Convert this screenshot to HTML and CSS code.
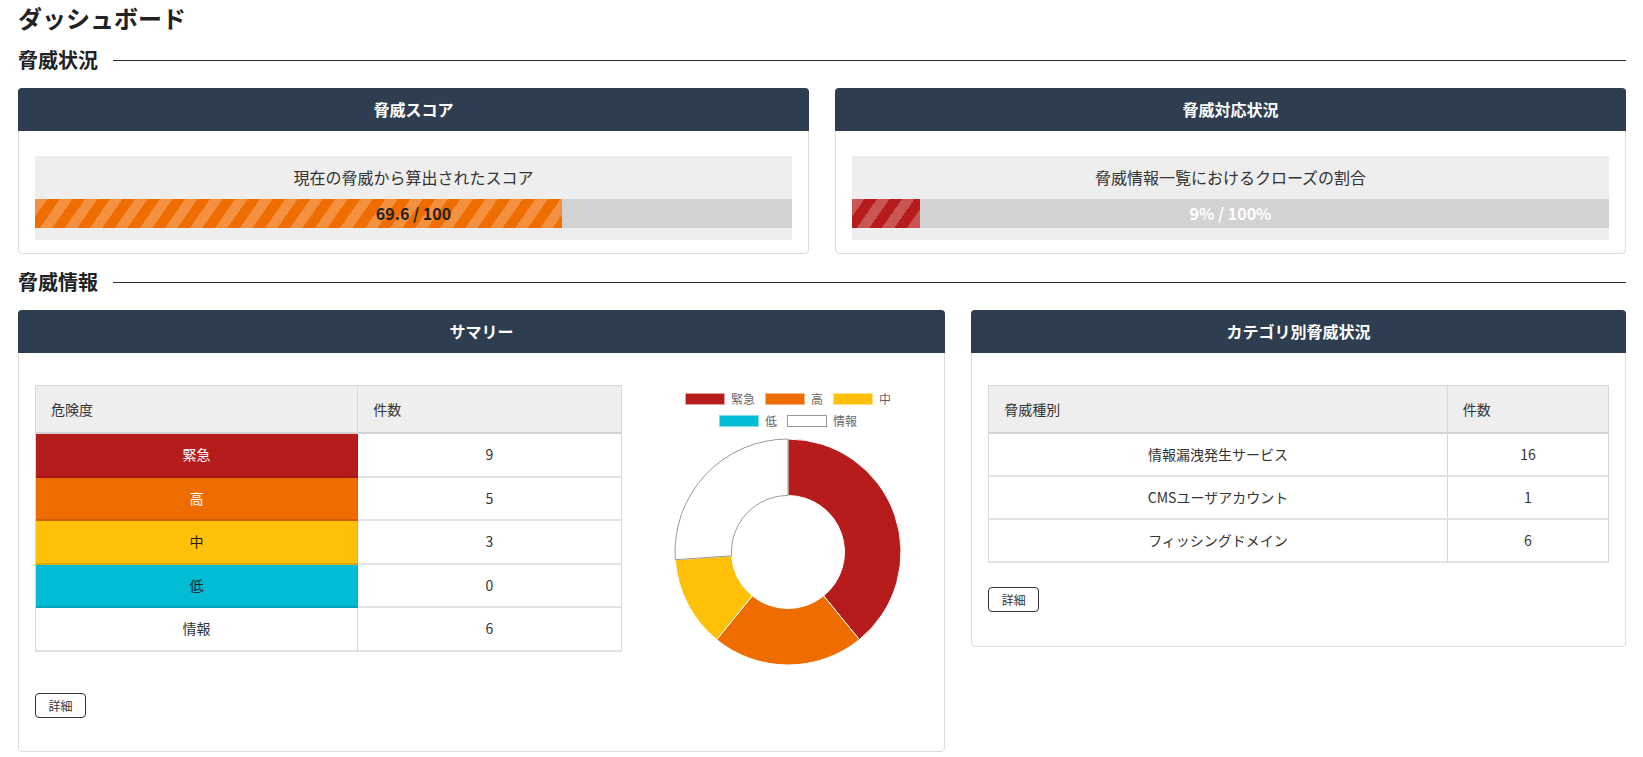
FILE: index.html
```html
<!DOCTYPE html>
<html lang="ja">
<head>
    <meta charset="UTF-8">
    <meta name="viewport" content="width=device-width, initial-scale=1.0">
    <title>ダッシュボード</title>
    <link rel="stylesheet" href="styles.css">
</head>
<body>
    <h1 class="page-title">ダッシュボード</h1>

    <h2 class="section-title">脅威状況</h2>
    <div class="row-half">
        <div class="card">
            <div class="card-header">脅威スコア</div>
            <div class="card-body score-body">
                <div class="score-box">
                    <p class="score-caption">現在の脅威から算出されたスコア</p>
                    <div class="bar">
                        <div class="bar-fill fill-orange" style="width: 69.6%"></div>
                        <span class="bar-label">69.6 / 100</span>
                    </div>
                </div>
            </div>
        </div>
        <div class="card">
            <div class="card-header">脅威対応状況</div>
            <div class="card-body score-body">
                <div class="score-box">
                    <p class="score-caption">脅威情報一覧におけるクローズの割合</p>
                    <div class="bar">
                        <div class="bar-fill fill-red" style="width: 9%"></div>
                        <span class="bar-label label-light">9% / 100%</span>
                    </div>
                </div>
            </div>
        </div>
    </div>

    <h2 class="section-title">脅威情報</h2>
    <div class="row-info">
        <div class="card">
            <div class="card-header">サマリー</div>
            <div class="card-body summary-body">
                <div class="summary-row">
                    <table class="data-table summary-table">
                        <thead>
                            <tr><th class="col-level">危険度</th><th>件数</th></tr>
                        </thead>
                        <tbody>
                            <tr><td class="lv-critical">緊急</td><td>9</td></tr>
                            <tr><td class="lv-high">高</td><td>5</td></tr>
                            <tr><td class="lv-medium">中</td><td>3</td></tr>
                            <tr><td class="lv-low">低</td><td>0</td></tr>
                            <tr><td>情報</td><td>6</td></tr>
                        </tbody>
                    </table>
                    <div class="chart">
                        <ul class="legend">
                            <li><span class="swatch sw-critical"></span>緊急</li>
                            <li><span class="swatch sw-high"></span>高</li>
                            <li><span class="swatch sw-medium"></span>中</li>
                            <li><span class="swatch sw-low"></span>低</li>
                            <li><span class="swatch sw-info"></span>情報</li>
                        </ul>
                        <svg class="donut" width="230" height="230" viewBox="0 0 230 230">
                            <path d="M115,2 A113,113 0 0 1 186.34,202.64 L150.67,158.82 A56.5,56.5 0 0 0 115,58.5 Z" fill="#b71c1c" stroke="#fff" stroke-width="1"/>
                            <path d="M186.34,202.64 A113,113 0 0 1 43.66,202.64 L79.33,158.82 A56.5,56.5 0 0 0 150.67,158.82 Z" fill="#ef6c00" stroke="#fff" stroke-width="1"/>
                            <path d="M43.66,202.64 A113,113 0 0 1 2.26,122.71 L58.63,118.85 A56.5,56.5 0 0 0 79.33,158.82 Z" fill="#ffc107" stroke="#fff" stroke-width="1"/>
                            <path d="M2.26,122.71 A113,113 0 0 1 115,2 L115,58.5 A56.5,56.5 0 0 0 58.63,118.85 Z" fill="#fff" stroke="#999" stroke-width="1"/>
                        </svg>
                    </div>
                </div>
                <button class="btn-detail">詳細</button>
            </div>
        </div>
        <div class="card">
            <div class="card-header">カテゴリ別脅威状況</div>
            <div class="card-body category-body">
                <table class="data-table category-table">
                    <thead>
                        <tr><th class="col-type">脅威種別</th><th>件数</th></tr>
                    </thead>
                    <tbody>
                        <tr><td>情報漏洩発生サービス</td><td>16</td></tr>
                        <tr><td>CMSユーザアカウント</td><td>1</td></tr>
                        <tr><td>フィッシングドメイン</td><td>6</td></tr>
                    </tbody>
                </table>
                <button class="btn-detail">詳細</button>
            </div>
        </div>
    </div>
</body>
</html>
```

FILE: styles.css
```css
body {
    margin: 0;
    padding: 0 17px 0 18px;
    font-family: "Noto Sans CJK JP", "Noto Sans", sans-serif;
    color: #333;
    background-color: #fff;
}

.page-title {
    margin: 2px 0 0;
    font-size: 24px;
    line-height: 31px;
    font-weight: bold;
    color: #222;
}

.section-title {
    display: flex;
    align-items: center;
    gap: 15px;
    margin: 14px 0 15px;
    font-size: 20px;
    line-height: 26px;
    font-weight: bold;
    color: #222;
}

.section-title::after {
    content: "";
    flex: 1;
    height: 1px;
    background-color: #2b2b2b;
}

.row-half + .section-title {
    margin-top: 15px;
    margin-bottom: 15px;
}

.row-half {
    display: grid;
    grid-template-columns: 1fr 1fr;
    gap: 26px;
}

.row-info {
    display: grid;
    grid-template-columns: calc((100% + 26px) * 7 / 12 - 26px) 1fr;
    gap: 26px;
    align-items: start;
}

.card {
    border: 1px solid #dcdcdc;
    border-radius: 4px;
    background-color: #fff;
}

.card-header {
    margin: -1px -1px 0;
    height: 43px;
    line-height: 43px;
    text-align: center;
    background-color: #2e3d4f;
    color: #fff;
    font-size: 16px;
    font-weight: bold;
    border-radius: 4px 4px 0 0;
}

.card-body {
    padding: 32px 16px 33px;
}

.category-body {
    padding-bottom: 34px;
}

.score-body {
    padding: 25px 16px 13px;
}

.score-box {
    background-color: #eee;
    padding-bottom: 12px;
}

.score-caption {
    margin: 0;
    height: 43px;
    line-height: 43px;
    text-align: center;
    font-size: 16px;
    color: #333;
}

.bar {
    position: relative;
    height: 29px;
    background-color: #d2d2d2;
}

.bar-fill {
    height: 100%;
    background-image: repeating-linear-gradient(125deg, rgba(255, 255, 255, 0.25) 0 10.2px, transparent 10.2px 20.5px);
}

.fill-orange {
    background-color: #ef6c00;
}

.fill-red {
    background-color: #b71c1c;
}

.bar-label {
    position: absolute;
    inset: 0;
    line-height: 29px;
    text-align: center;
    font-size: 16px;
    font-weight: bold;
    color: #222;
}

.label-light {
    color: #fff;
}

.summary-row {
    display: grid;
    grid-template-columns: calc((100% + 26px) * 8 / 12 - 26px) 1fr;
    gap: 26px;
    align-items: start;
    margin-bottom: 26px;
}

.data-table {
    width: 100%;
    border-collapse: separate;
    border-spacing: 0;
    border-top: 1px solid #d8d8d8;
    border-left: 1px solid #d8d8d8;
    font-size: 14px;
    color: #333;
}

.data-table th,
.data-table td {
    padding: 0 15px;
    border-right: 1px solid #d8d8d8;
    border-bottom: 2px solid #e2e2e2;
}

.data-table th {
    height: 46px;
    line-height: 46px;
    text-align: left;
    font-weight: normal;
    background-color: #eee;
    border-bottom-color: #d4d4d4;
}

.data-table td {
    height: 41.6px;
    line-height: 41.6px;
    text-align: center;
}

.category-table {
    margin-bottom: 24px;
}

.category-table td {
    height: 41px;
    line-height: 41px;
}

.col-level {
    width: 55%;
}

.col-type {
    width: 74%;
}

.lv-critical {
    background-color: #b71c1c;
    color: #fff;
}

.lv-high {
    background-color: #ef6c00;
    color: #fff;
}

.lv-medium {
    background-color: #ffc107;
    color: #222;
}

.lv-low {
    background-color: #00bcd4;
    color: #222;
}

.data-table .lv-critical,
.data-table .lv-high,
.data-table .lv-medium,
.data-table .lv-low {
    border-bottom-color: rgba(0, 0, 0, 0.12);
    border-right-color: rgba(0, 0, 0, 0.08);
}

.chart {
    height: 282px;
    display: flex;
    flex-direction: column;
    align-items: center;
}

.legend {
    list-style: none;
    margin: 0;
    padding: 8px 0 10px;
    max-width: 250px;
    display: flex;
    flex-wrap: wrap;
    justify-content: center;
    gap: 10px;
    font-size: 12px;
    line-height: 12px;
    color: #666;
}

.legend li {
    display: flex;
    align-items: center;
    gap: 6px;
}

.swatch {
    display: inline-block;
    width: 40px;
    height: 12px;
    box-sizing: border-box;
}

.sw-critical {
    background-color: #b71c1c;
    border: 1px solid #e8a0a0;
}

.sw-high {
    background-color: #ef6c00;
    border: 1px solid #f6b680;
}

.sw-medium {
    background-color: #ffc107;
    border: 1px solid #ffe083;
}

.sw-low {
    background-color: #00bcd4;
    border: 1px solid #80dde9;
}

.sw-info {
    background-color: #fff;
    border: 1px solid #999;
}

.donut {
    display: block;
}

.btn-detail {
    display: block;
    width: 51px;
    height: 25px;
    padding: 0;
    font-family: inherit;
    font-size: 12px;
    color: #333;
    background-color: #fff;
    border: 1px solid #333;
    border-radius: 4px;
    cursor: pointer;
}
```
